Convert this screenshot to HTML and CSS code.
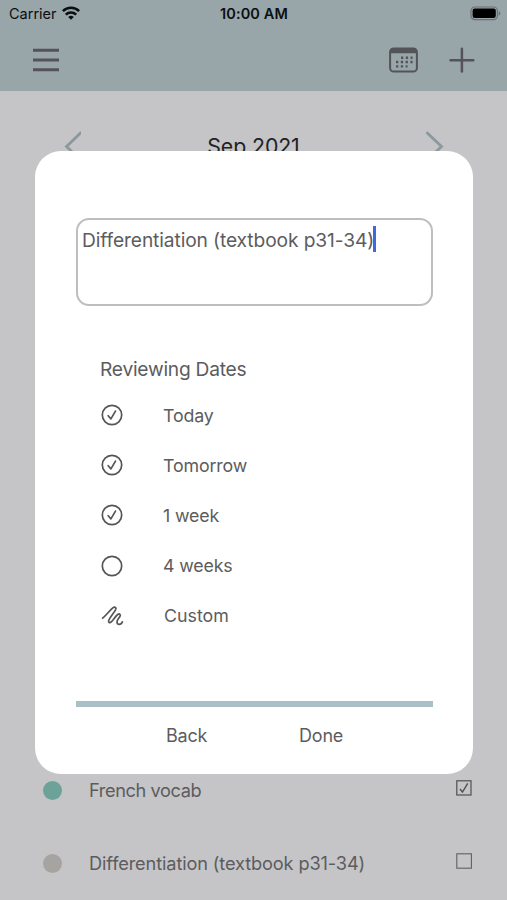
FILE: index.html
```html
<!DOCTYPE html>
<html lang="en">
<head>
<meta charset="utf-8">
<title>Reviewing Dates</title>
<link rel="stylesheet" href="styles.css">
</head>
<body>
<div class="screen">
  <header class="header">
    <div class="status">
      <div class="carrier"><span>Carrier</span>
        <svg width="18" height="14" viewBox="0 0 18 14" fill="none" stroke="#0b0f11" stroke-width="2.5"><path d="M.9 5.1a11.5 11.5 0 0 1 16.2 0M3.8 8.6a7.4 7.4 0 0 1 10.4 0"/><path d="M9 13.8 6.2 11a4 4 0 0 1 5.6 0Z" fill="#0b0f11" stroke="none"/></svg>
      </div>
      <time class="clock">10:00 AM</time>
      <svg class="battery" width="32" height="15" viewBox="0 0 32 15"><rect x="1" y="1" width="26.4" height="12.6" rx="3.8" fill="none" stroke="#697275" stroke-width="1.2"/><rect x="2.6" y="2.6" width="23.2" height="9.4" rx="2.2" fill="#000"/><path d="M28.7 5v4.8q1.6-.7 1.6-2.4T28.7 5" fill="#697275"/></svg>
    </div>
    <nav class="toolbar">
      <svg width="26" height="26" viewBox="0 0 26 26" stroke="#555358" stroke-width="3"><path d="M0 3.2h26M0 13h26M0 22.8h26"/></svg>
      <div class="actions">
        <svg width="29" height="26" viewBox="0 0 29 26"><rect x="1.1" y="1.5" width="26.8" height="23" rx="3.6" fill="none" stroke="#535457" stroke-width="2"/><path d="M1 6.3V4.5Q1 1 4.5 1h20Q28 1 28 4.5v1.8Z" fill="#535457"/><path d="M12 10.8h11.6M7 15h16.6M7 19.4h11.6" stroke="#535457" stroke-width="2.4" stroke-dasharray="2.3 2.5"/></svg>
        <svg width="26" height="26" viewBox="0 0 26 26" stroke="#555358" stroke-width="2.5" stroke-linecap="round"><path d="M1.5 13.3h22.8M12.9 1.7v22.8"/></svg>
      </div>
    </nav>
  </header>
  <main class="content">
    <div class="month">
      <svg width="18" height="31" viewBox="0 0 18 31" fill="none" stroke="#8b989e" stroke-width="2.8" stroke-linecap="round"><path d="M17.5 2 3.5 15.5 17.5 29"/></svg>
      <h1>Sep 2021</h1>
      <svg width="18" height="31" viewBox="0 0 18 31" fill="none" stroke="#8b989e" stroke-width="2.8" stroke-linecap="round"><path d="M1.3 2 15.5 15.5 1.3 29"/></svg>
    </div>
    <ul class="tasks">
      <li><i class="dot green"></i><span class="french">French vocab</span>
        <svg class="box" width="16" height="16" viewBox="0 0 16 16" fill="none" stroke="#505053"><rect x=".8" y=".8" width="14.2" height="14.2" stroke-width="1.2"/><path d="m4 9 2.5 3 5.2-8.6" stroke-width="1.4"/></svg></li>
      <li><i class="dot grey"></i><span>Differentiation (textbook p31-34)</span>
        <svg class="box" width="16" height="16" viewBox="0 0 16 16" fill="none" stroke="#606063"><rect x=".8" y=".8" width="14.6" height="14.4" stroke-width="1.1"/></svg></li>
    </ul>
  </main>
  <section class="dialog">
    <div class="field"><span>Differentiation (textbook p31-34)</span><i class="caret"></i></div>
    <h2>Reviewing Dates</h2>
    <ul class="dates">
      <li><svg class="mark" viewBox="0 0 24 24"><circle cx="12" cy="12" r="9.7"/><path d="m8.2 12.7 2.7 3.2 4.6-7.8"/></svg><span>Today</span></li>
      <li><svg class="mark" viewBox="0 0 24 24"><circle cx="12" cy="12" r="9.7"/><path d="m8.2 12.7 2.7 3.2 4.6-7.8"/></svg><span>Tomorrow</span></li>
      <li><svg class="mark" viewBox="0 0 24 24"><circle cx="12" cy="12" r="9.7"/><path d="m8.2 12.7 2.7 3.2 4.6-7.8"/></svg><span>1 week</span></li>
      <li><svg class="mark" viewBox="0 0 24 24"><circle cx="12" cy="12" r="9.7"/></svg><span>4 weeks</span></li>
      <li><svg class="mark" viewBox="0 0 24 24"><path d="M2.6 14.2C6 11.5 9.300 6.800 12.800 3.900c2.200-1.800 4.100-.3 2.600 2.200-1.800 3.200-5 6.500-6.500 9.900-1.100 2.700.7 3.500 2.600 1.700 2.200-2.100 3.800-5.400 6.200-7.200 1.900-1.300 3.300.1 2.200 2-1.100 2-2.900 3.200-2.900 5.500.2 3.200 4 3.300 5.400-.1"/></svg><span class="custom">Custom</span></li>
    </ul>
    <footer class="buttons"><span class="back">Back</span><span>Done</span></footer>
  </section>
</div>
</body>
</html>
```

FILE: styles.css
```css
* { box-sizing: border-box; }
body { margin: 0; font-family: Inter, "Liberation Sans", sans-serif; color: #5c5c5e; }
h1, h2, ul { margin: 0; padding: 0; font-weight: 400; list-style: none; }
svg { display: block; flex: none; }
.screen { position: relative; width: 507px; height: 900px; overflow: hidden; background: #c5c5c7; display: flex; flex-direction: column; }
.header { height: 91px; background: #98a5a9; }
.status { height: 26px; padding: 1px 7px 0 9px; display: grid; grid-template-columns: 1fr auto 1fr; align-items: center; color: #0b0f11; font-size: 14.5px; }
.carrier { display: flex; align-items: center; gap: 5px; }
.carrier svg { margin-top: -2px; }
.clock { font-weight: 600; letter-spacing: .1px; margin-left: -1px; }
.battery { justify-self: end; margin-right: -2px; margin-top: -1px; }
.toolbar { height: 66px; padding: 2px 32px 0 33px; display: flex; align-items: center; justify-content: space-between; }
.actions { display: flex; gap: 31px; }
.content { flex: 1; display: flex; flex-direction: column; justify-content: space-between; }
.month { margin-top: 38px; padding: 0 63px; height: 34px; display: flex; justify-content: space-between; align-items: center; color: #222225; }
.month h1 { font-size: 21.3px; line-height: 30px; letter-spacing: -.1px; }
.tasks { padding-bottom: 1px; }
.tasks li { height: 73px; padding: 0 35px 0 43px; display: flex; align-items: center; font-size: 18.2px; letter-spacing: -.13px; }
.tasks .french { letter-spacing: -.4px; }
.dot { width: 19px; height: 19px; border-radius: 50%; margin: 2px 27px 0 0; }
.green { background: #6da298; }
.grey { background: #a5a4a1; }
.box { margin: -3px 0 0 auto; }
.dialog { position: absolute; left: 35px; top: 151px; width: 438px; height: 623px; border-radius: 26px; background: #fff; padding: 67px 40.5px 0 40.5px; }
.field { height: 88px; border: 2px solid #bebebe; border-radius: 13px; padding: 6px 4.5px; display: flex; align-items: flex-start; font-size: 19.2px; line-height: 28px; letter-spacing: -.11px; white-space: nowrap; }
.caret { width: 2.5px; height: 26px; margin-left: -1px; background: #4268de; }
.dialog h2 { margin: 49px 0 0 24.5px; font-size: 19.2px; line-height: 28px; letter-spacing: -.24px; }
.dates { margin-top: 7px; padding-left: 24.5px; }
.dates li { height: 50.2px; display: flex; align-items: center; gap: 39px; font-size: 17.8px; letter-spacing: -.15px; }
.mark { width: 24px; height: 24px; fill: none; stroke: #555; stroke-width: 1.7; stroke-linecap: round; stroke-linejoin: round; }
.dates .custom { margin-left: 1px; letter-spacing: 0; }
.buttons { margin-top: 60px; border-top: 6px solid #a9c0c7; padding: 17px 0 0 90.5px; display: flex; font-size: 18px; line-height: 24px; letter-spacing: -.2px; }
.back { width: 133px; }
```
